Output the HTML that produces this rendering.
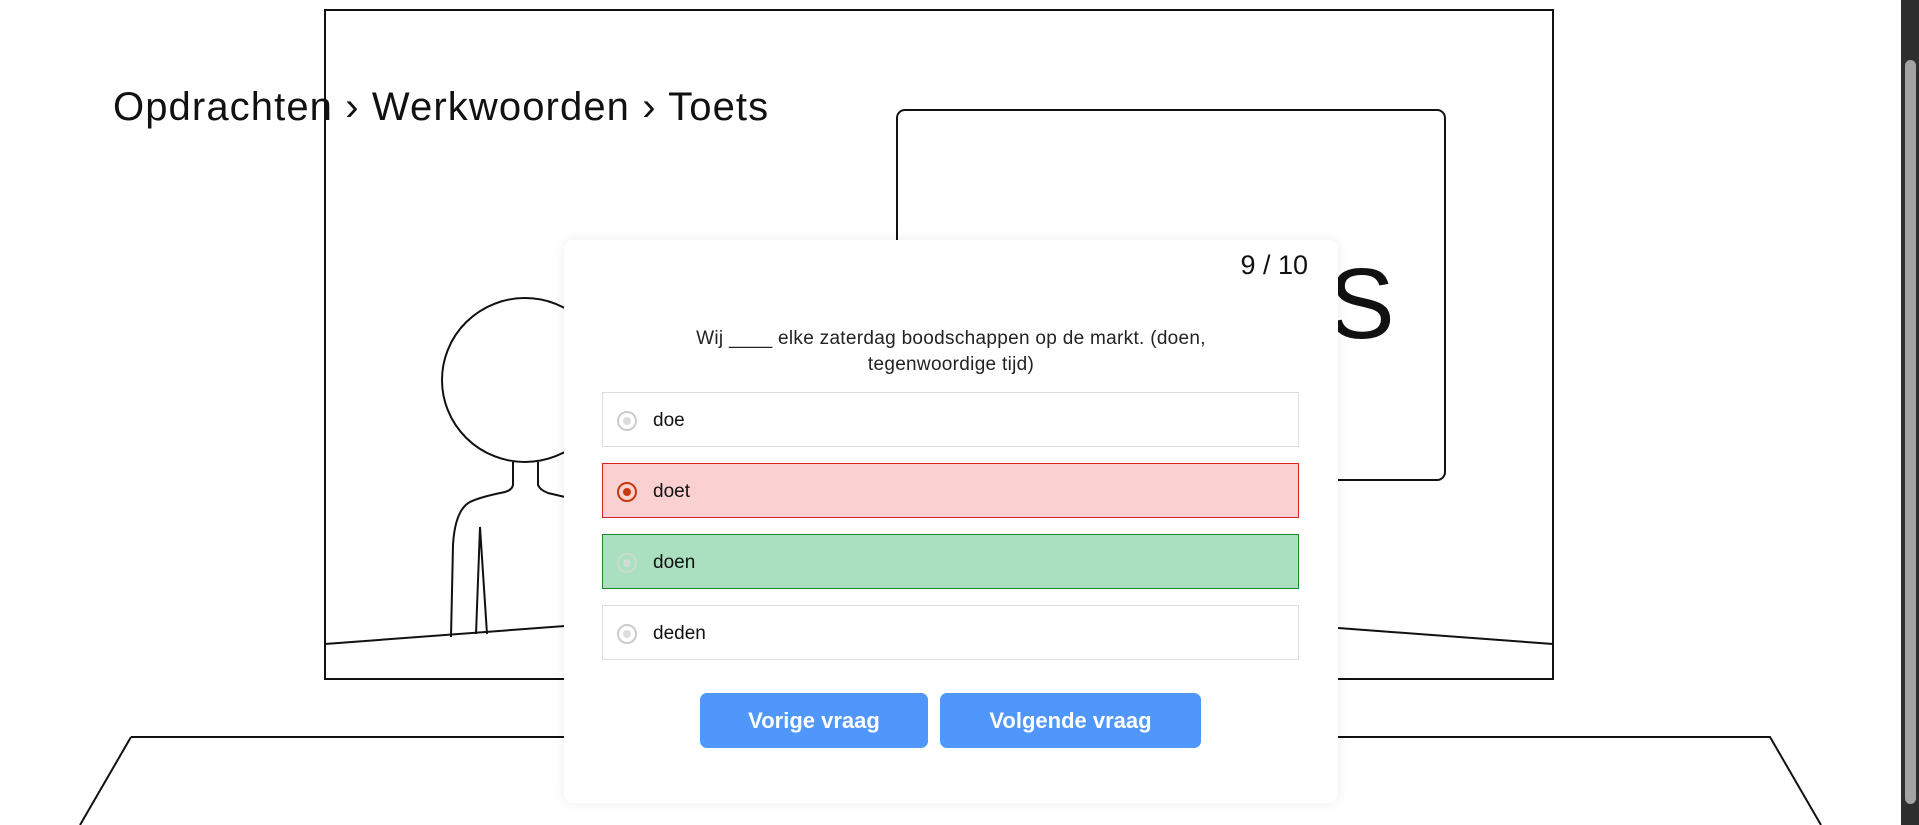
<!DOCTYPE html>
<html><head><meta charset="utf-8"><style>
html,body{margin:0;padding:0;width:1919px;height:825px;overflow:hidden;background:#fff;font-family:"Liberation Sans",sans-serif}
svg.bg{position:absolute;left:0;top:0}
.crumb{position:absolute;left:113px;top:85px;font-size:40px;color:#111;letter-spacing:1.1px}
.card{position:absolute;left:564px;top:240px;width:774px;height:563px;background:#fff;border-radius:9px;box-shadow:0 0 12px rgba(0,0,0,0.08)}
.cnt{position:absolute;right:30px;top:10px;font-size:27px;color:#111}
.q{position:absolute;left:80px;width:614px;top:86px;text-align:center;font-size:19px;line-height:26px;color:#222;letter-spacing:0.3px}
.opt{position:absolute;left:38px;width:695px;height:53px;border:1px solid #ddd;box-sizing:content-box}
.opt .r{position:absolute;left:14px;top:18px;width:20px;height:20px;border:2px solid #ccc;border-radius:50%;box-sizing:border-box}
.opt .r:after{content:"";position:absolute;left:4px;top:4px;width:8px;height:8px;border-radius:50%;background:#ddd}
.opt span{position:absolute;left:50px;top:17px;font-size:19px;color:#111}
.red{background:#fbd0d0;border-color:#d22}
.red .r{border-color:#c43a0a}.red .r:after{background:#c43a0a}
.green{background:#aae0c0;border-color:#1a8a2a}
.green .r{border-color:#c8dcd0}.green .r:after{background:#d0dcd6}
.btn{position:absolute;top:453px;height:55px;background:#4f97fb;border-radius:7px;color:#fff;font-size:22px;font-weight:bold;text-align:center;line-height:55px}
.sb{position:absolute;left:1901px;top:0;width:18px;height:825px;background:#2e2e2e}
.th{position:absolute;left:4px;top:60px;width:11px;height:744px;background:#a3a3a3;border-radius:6px}
</style></head><body>
<svg class="bg" width="1919" height="825" fill="none" stroke="#111" stroke-width="2">
<rect x="325" y="10" width="1228" height="669"/>
<rect x="897" y="110" width="548" height="370" rx="8"/>
<text x="1328" y="338" font-size="100" font-family="Liberation Sans" fill="#111" stroke="none">S</text>
<ellipse cx="525" cy="380" rx="83" ry="82"/>
<path d="M513 462 V485 Q512 490 505 492 Q480 497 470 502 Q455 510 453 545 L451 637"/>
<path d="M538 462 V485 Q540 490 548 493 L565 497"/>
<path d="M476 634 L480 527 L487 634"/>
<path d="M325 644 L565 626"/>
<path d="M1338 628 L1553 644"/>
<path d="M131 737 L1770 737 L1821 825 M131 737 L80 825"/>
</svg>
<div class="crumb">Opdrachten › Werkwoorden › Toets</div>
<div class="card">
<div class="cnt">9 / 10</div>
<div class="q">Wij ____ elke zaterdag boodschappen op de markt. (doen, tegenwoordige tijd)</div>
<div class="opt" style="top:152px"><div class="r"></div><span>doe</span></div>
<div class="opt red" style="top:223px"><div class="r"></div><span>doet</span></div>
<div class="opt green" style="top:294px"><div class="r"></div><span>doen</span></div>
<div class="opt" style="top:365px"><div class="r"></div><span>deden</span></div>
<div class="btn" style="left:136px;width:228px">Vorige vraag</div>
<div class="btn" style="left:376px;width:261px">Volgende vraag</div>
</div>
<div class="sb"><div class="th"></div></div>
</body></html>
